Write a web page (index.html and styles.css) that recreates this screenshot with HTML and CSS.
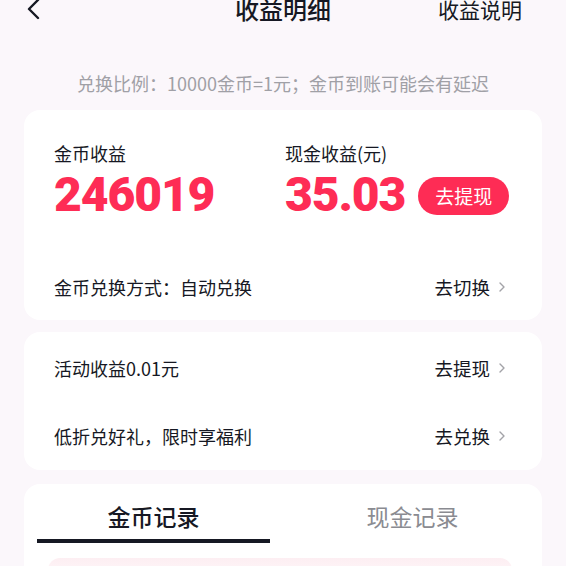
FILE: index.html
```html
<!DOCTYPE html>
<html lang="zh-CN">
<head>
<meta charset="utf-8">
<title>收益明细</title>
<link rel="stylesheet" href="styles.css">
</head>
<body>
<div class="page">
  <header class="topbar">
    <span class="back">
      <svg width="14" height="22" viewBox="0 0 14 22"><path d="M12 2 L3 11 L12 20" fill="none" stroke="#161823" stroke-width="2.4" stroke-linecap="round" stroke-linejoin="round"/></svg>
    </span>
    <span class="title">收益明细</span>
    <span class="help">收益说明</span>
  </header>

  <p class="notice">兑换比例：10000金币=1元；金币到账可能会有延迟</p>

  <section class="card summary">
    <div class="stats">
      <div class="stat coin">
        <div class="label">金币收益</div>
        <div class="amount">246019</div>
      </div>
      <div class="stat cash">
        <div class="label">现金收益(元)</div>
        <div class="amount-row">
          <div class="amount">35.03</div>
          <button class="withdraw">去提现</button>
        </div>
      </div>
    </div>
    <div class="row">
      <span class="row-text">金币兑换方式：自动兑换</span>
      <span class="row-link">去切换<svg class="chev" width="8" height="12" viewBox="0 0 8 12"><path d="M2 2 L6 6 L2 10" fill="none" stroke="#a3a3a8" stroke-width="1.4" stroke-linecap="round" stroke-linejoin="round"/></svg></span>
    </div>
  </section>

  <section class="card extras">
    <div class="row">
      <span class="row-text">活动收益0.01元</span>
      <span class="row-link">去提现<svg class="chev" width="8" height="12" viewBox="0 0 8 12"><path d="M2 2 L6 6 L2 10" fill="none" stroke="#a3a3a8" stroke-width="1.4" stroke-linecap="round" stroke-linejoin="round"/></svg></span>
    </div>
    <div class="row">
      <span class="row-text">低折兑好礼，限时享福利</span>
      <span class="row-link">去兑换<svg class="chev" width="8" height="12" viewBox="0 0 8 12"><path d="M2 2 L6 6 L2 10" fill="none" stroke="#a3a3a8" stroke-width="1.4" stroke-linecap="round" stroke-linejoin="round"/></svg></span>
    </div>
  </section>

  <section class="card records">
    <div class="tabs">
      <div class="tab active"><span class="tab-label">金币记录</span><span class="tab-bar"></span></div>
      <div class="tab"><span class="tab-label">现金记录</span></div>
    </div>
    <div class="record-box"></div>
  </section>
</div>
</body>
</html>
```

FILE: styles.css
```css
* { box-sizing: border-box; }
html, body { margin: 0; padding: 0; }
body {
  background: #fbf7fb;
  font-family: "Noto Sans CJK SC", "Noto Sans", sans-serif;
  color: #161823;
  overflow: hidden;
  height: 566px;
}
.page { display: flex; flex-direction: column; }

.topbar {
  display: flex;
  align-items: center;
  justify-content: space-between;
  height: 30px;
  margin-top: -6px;
  padding: 0 44px 0 26px;
  position: relative;
}
.back { display: flex; align-items: center; width: 14px; }
.title {
  position: absolute;
  left: 0; right: 0;
  text-align: center;
  font-size: 24px;
  font-weight: 500;
  line-height: 30px;
  pointer-events: none;
}
.help { font-size: 21px; line-height: 30px; }

.notice {
  margin: 0;
  margin-top: 46px;
  text-align: center;
  font-size: 18px;
  line-height: 26px;
  color: #a0a0a6;
}

.card {
  background: #ffffff;
  border-radius: 16px;
  margin: 0 24px;
}

.summary { margin-top: 14px; padding: 30px 36px 0 30px; }
.stats { display: flex; }
.stat.coin { width: 231px; flex-shrink: 0; }
.stat.cash { flex: 1; }
.label { font-size: 18px; line-height: 26px; }
.amount {
  font-family: "Roboto", "Liberation Sans", sans-serif;
  font-weight: 900;
  font-size: 48px;
  line-height: 48px;
  color: #fe2c55;
  margin-top: 5px;
  letter-spacing: -1.1px;
}
.amount-row { display: flex; align-items: center; }
.withdraw {
  flex-shrink: 0;
  white-space: nowrap;
  margin-left: 13px;
  margin-top: 7px;
  height: 38px;
  padding: 0 17px;
  border: none;
  border-radius: 19px;
  background: #fe2c55;
  color: #ffffff;
  font-family: "Noto Sans CJK SC", sans-serif;
  font-size: 19px;
  line-height: 38px;
}

.row {
  display: flex;
  align-items: center;
  justify-content: space-between;
  height: 68px;
  font-size: 18px;
}
.summary .row { margin-top: 34px; height: 67px; }
.row-link { display: flex; align-items: center; font-size: 18.5px; }
.chev { margin-left: 8px; }

.extras { margin-top: 12px; padding: 2px 36px 0 30px; }

.records { margin-top: 14px; padding: 17px 0 0; height: 200px; }
.tabs { display: grid; grid-template-columns: 1fr 1fr; }
.tab { display: flex; flex-direction: column; align-items: center; }
.tab-label { font-size: 23px; line-height: 30px; color: #8a8b91; }
.tab.active .tab-label { color: #161823; font-weight: 500; }
.tab-bar {
  margin-top: 8px;
  width: 233px;
  height: 4px;
  background: #161823;
}
.record-box {
  margin: 15px 30px 0 24px;
  height: 40px;
  border-radius: 12px 12px 0 0;
  background: linear-gradient(#fdeef2, #ffffff 30px);
}
```
